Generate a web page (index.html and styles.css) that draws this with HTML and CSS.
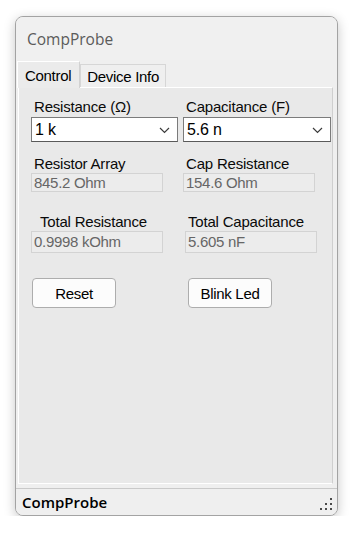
FILE: index.html
```html
<!DOCTYPE html>
<html lang="en">
<head>
  <meta charset="UTF-8">
  <title>CompProbe</title>
  <link rel="stylesheet" href="styles.css">
</head>
<body>
  <div class="window">
    <div class="titlebar">CompProbe</div>

    <div class="tabs">
      <div class="tab active">Control</div>
      <div class="tab">Device Info</div>
    </div>

    <div class="panel">
      <div class="row row-combo">
        <div class="cell">
          <div class="label">Resistance (Ω)</div>
          <div class="combo combo-left">
            <span>1 k</span>
            <svg class="chev" width="11" height="7" viewBox="0 0 11 7"><path d="M1 1 L5.5 5.5 L10 1" fill="none" stroke="#3c3c3c" stroke-width="1.2"/></svg>
          </div>
        </div>
        <div class="cell">
          <div class="label">Capacitance (F)</div>
          <div class="combo combo-right">
            <span>5.6 n</span>
            <svg class="chev" width="11" height="7" viewBox="0 0 11 7"><path d="M1 1 L5.5 5.5 L10 1" fill="none" stroke="#3c3c3c" stroke-width="1.2"/></svg>
          </div>
        </div>
      </div>

      <div class="row row-read">
        <div class="cell">
          <div class="label">Resistor Array</div>
          <div class="readbox">845.2 Ohm</div>
        </div>
        <div class="cell">
          <div class="label">Cap Resistance</div>
          <div class="readbox">154.6 Ohm</div>
        </div>
      </div>

      <div class="row row-total">
        <div class="cell">
          <div class="label indent">Total Resistance</div>
          <div class="readbox tall">0.9998 kOhm</div>
        </div>
        <div class="cell shift">
          <div class="label">Total Capacitance</div>
          <div class="readbox tall">5.605 nF</div>
        </div>
      </div>

      <div class="row row-buttons">
        <div class="cell">
          <button class="btn">Reset</button>
        </div>
        <div class="cell shift-btn">
          <button class="btn">Blink Led</button>
        </div>
      </div>
    </div>

    <div class="statusbar">
      <span>CompProbe</span>
      <svg class="grip" width="14" height="14" viewBox="0 0 14 14">
        <rect x="11" y="1" width="2" height="2" fill="#4a4a4a"/>
        <rect x="6" y="6" width="2" height="2" fill="#4a4a4a"/>
        <rect x="11" y="6" width="2" height="2" fill="#4a4a4a"/>
        <rect x="1" y="11" width="2" height="2" fill="#4a4a4a"/>
        <rect x="6" y="11" width="2" height="2" fill="#4a4a4a"/>
        <rect x="11" y="11" width="2" height="2" fill="#4a4a4a"/>
      </svg>
    </div>
  </div>
</body>
</html>
```

FILE: styles.css
```css
body {
  margin: 0;
  background: #ffffff;
  font-family: "Liberation Sans", Arial, sans-serif;
}

.window {
  position: relative;
  margin: 16px 0 0 15px;
  width: 321px;
  height: 498px;
  border: 1px solid #a3a3a3;
  border-radius: 8px;
  background: #efefef;
  box-shadow: 0 3px 12px rgba(0, 0, 0, 0.22);
  display: flex;
  flex-direction: column;
  overflow: hidden;
}

.titlebar {
  height: 43px;
  padding-left: 11px;
  display: flex;
  align-items: center;
  font-family: "Open Sans", "Noto Sans", sans-serif;
  font-size: 15.5px;
  color: #5b5b5b;
  background: #f0f0f0;
}

.tabs {
  display: flex;
  align-items: flex-end;
  height: 27px;
  padding-left: 1px;
}

.tab {
  font-size: 15px;
  letter-spacing: -0.3px;
  color: #000;
  height: 22px;
  padding: 0 6px 0 6px;
  display: flex;
  align-items: center;
  background: #efefef;
  border: 1px solid #d6d6d6;
  border-bottom: none;
}

.tab.active {
  height: 26px;
  padding: 0 8px 0 7px;
  background: #ebebeb;
  border-color: #ffffff;
  border-right-color: #d2d2d2;
  margin-bottom: -1px;
  position: relative;
  z-index: 1;
}

.panel {
  margin: 0 4px 0 2px;
  height: 385px;
  background: #e9e9e9;
  border: 1px solid #ffffff;
  border-right-color: #cfcfcf;
  border-bottom-color: #ffffff;
  padding: 10px 0 0 12px;
  overflow: hidden;
}

.row {
  display: flex;
}

.cell {
  flex: 0 0 152px;
}

.cell + .cell {
  flex: 1 1 auto;
}

.label {
  font-size: 15px;
  letter-spacing: -0.2px;
  line-height: 17px;
  color: #0a0a0a;
  padding-left: 3px;
}

.label.indent {
  padding-left: 9px;
}

.shift {
  padding-left: 2px;
}

.shift-btn {
  padding-left: 5px;
}

.row-combo .label {
  margin-bottom: 2px;
}

.combo {
  height: 23px;
  background: #ffffff;
  border: 1px solid #7b7b7b;
  border-bottom-color: #5a5a5a;
  display: flex;
  align-items: center;
  justify-content: space-between;
  padding: 0 7px 0 3px;
  font-size: 16px;
  color: #000;
  letter-spacing: -0.2px;
}

.combo-left {
  width: 135px;
}

.combo-right {
  width: 136px;
}

.chev {
  margin-top: 2px;
}

.row-read {
  margin-top: 13px;
}

.row-total {
  margin-top: 21px;
}

.row-buttons {
  margin-top: 25px;
}

.readbox {
  margin-top: 1px;
  width: 128px;
  height: 17px;
  border: 1px solid #d3d3d3;
  background: #ececec;
  color: #666666;
  font-size: 15px;
  letter-spacing: -0.3px;
  line-height: 17px;
  padding-left: 2px;
}

.readbox.tall {
  height: 20px;
  line-height: 20px;
}

.btn {
  width: 84px;
  height: 30px;
  border: 1px solid #adadad;
  border-radius: 4px;
  background: #fcfcfc;
  font-family: "Liberation Sans", Arial, sans-serif;
  font-size: 15px;
  letter-spacing: -0.3px;
  color: #000;
  padding: 0;
}

.row-buttons .cell:first-child .btn {
  margin-left: 1px;
}

.statusbar {
  flex: 1;
  border-top: 1px solid #c9c9c9;
  margin-top: 4px;
  display: flex;
  align-items: center;
  padding-left: 6px;
  font-family: "Open Sans", "Noto Sans", sans-serif;
  font-size: 15px;
  font-weight: 600;
  color: #000;
  background: #efefef;
}

.grip {
  position: absolute;
  right: 4px;
  bottom: 4px;
}
```
